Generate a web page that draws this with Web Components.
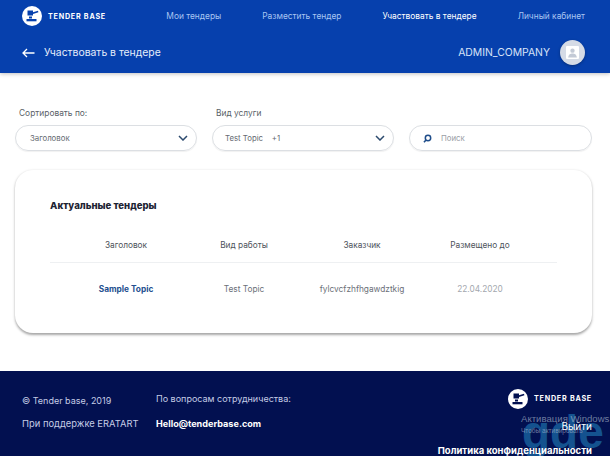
<!DOCTYPE html>
<html lang="ru">
<head>
<meta charset="utf-8">
<title>Tender Base</title>
<style>
html, body { margin: 0; padding: 0; background: #fff; }
body { font-family: Inter, "Open Sans", sans-serif; width: 610px; height: 456px; overflow: hidden; position: relative; }
</style>
</head>
<body>
<tb-header></tb-header>
<tb-filters></tb-filters>
<tb-card></tb-card>
<tb-footer></tb-footer>
<tb-watermark></tb-watermark>
<script>
class TbLogo extends HTMLElement {
	constructor() {
		super();
		this.attachShadow({ mode: 'open' });
		this.shadowRoot.innerHTML = `
			<style>
				:host { display: flex; align-items: center; gap: 6px; color: #fff; }
				svg { width: 20px; height: 20px; display: block; flex: none; }
				span { font-size: 7.2px; font-weight: 700; letter-spacing: .75px; white-space: nowrap; }
			</style>
			<svg viewBox="0 0 20 20">
				<circle cx="10" cy="10" r="10" fill="#fff"/>
				<path d="M5.500 4.500h5.500v1.800l5-1.500.4 1.500-5.400 1.600v1.600H5.500z" fill="var(--mark, #0640ad)"/>
				<path d="M7 10.500h3v2H7z" fill="var(--mark, #0640ad)"/>
				<path d="M4.500 13h10v2.300h-10z" fill="var(--mark, #0640ad)"/>
			</svg>
			<span>TENDER BASE</span>
		`;
	}
}
customElements.define('tb-logo', TbLogo);

class TbHeader extends HTMLElement {
	constructor() {
		super();
		this.attachShadow({ mode: 'open' });
		this.shadowRoot.innerHTML = `
			<style>
				:host { display: block; height: 73px; box-sizing: border-box; background: #0640ad; color: #fff; box-shadow: 0 1px 4px rgba(0,0,0,.25); position: relative; }
				.top { height: 32px; display: flex; align-items: center; padding: 0 25px 0 22px; justify-content: space-between; }
				nav { display: flex; gap: 41px; font-size: 8.4px; color: #a9c6f2; }
				nav a.on { color: #fff; }
				.sub { height: 41px; display: flex; align-items: center; padding: 0 25px 2px 22px; justify-content: space-between; }
				.title { display: flex; align-items: center; gap: 9px; font-size: 10.4px; color: #e6eefb; }
				.title svg { width: 13px; height: 10px; display: block; }
				.user { display: flex; align-items: center; gap: 10px; font-size: 10.4px; color: #d6e2f7; }
				.ava { width: 25px; height: 25px; border-radius: 50%; background: #d5dbe6; display: flex; align-items: center; justify-content: center; box-shadow: 0 1px 3px rgba(0,0,0,.3); }
				.ava svg { width: 13px; height: 13px; display: block; }
			</style>
			<div class="top">
				<tb-logo></tb-logo>
				<nav>
					<a>Мои тендеры</a>
					<a>Разместить тендер</a>
					<a class="on">Участвовать в тендере</a>
					<a>Личный кабинет</a>
				</nav>
			</div>
			<div class="sub">
				<div class="title">
					<svg viewBox="0 0 13 10"><path d="M12.500 5H1M5 1 1 5l4 4" fill="none" stroke="#fff" stroke-width="1.300"/></svg>
					<span>Участвовать в тендере</span>
				</div>
				<div class="user">
					<span>ADMIN_COMPANY</span>
					<div class="ava">
						<svg viewBox="0 0 12 12"><rect width="12" height="12" rx="1" fill="#fff"/><circle cx="6" cy="4.300" r="2" fill="#c3cad6"/><path d="M2 10.500c.5-3 2-3.600 4-3.600s3.500.6 4 3.600z" fill="#c3cad6"/></svg>
					</div>
				</div>
			</div>
		`;
	}
}
customElements.define('tb-header', TbHeader);

class TbSelect extends HTMLElement {
	constructor() {
		super();
		this.attachShadow({ mode: 'open' });
		this.shadowRoot.innerHTML = `
			<style>
				:host { display: block; width: 182px; }
				label { display: block; font-size: 8.4px; color: #5a5f68; margin: 0 0 6px 4px; height: 11px; line-height: 11px; }
				.box { height: 26px; box-sizing: border-box; border: 1px solid #dcdfe3; border-radius: 13px; display: flex; align-items: center; justify-content: space-between; padding: 0 8px 0 var(--pad, 14px); font-size: 7.8px; color: #666b72; box-shadow: 0 1px 1px rgba(0,0,0,.06); }
				svg { width: 10px; height: 6px; display: block; }
			</style>
			<label></label>
			<div class="box">
				<div><slot></slot></div>
				<svg viewBox="0 0 10 6"><path d="M1 1l4 4 4-4" fill="none" stroke="#2c4a6e" stroke-width="1.500"/></svg>
			</div>
		`;
		this.shadowRoot.querySelector('label').textContent = this.getAttribute('label');
	}
}
customElements.define('tb-select', TbSelect);

class TbSearch extends HTMLElement {
	constructor() {
		super();
		this.attachShadow({ mode: 'open' });
		this.shadowRoot.innerHTML = `
			<style>
				:host { display: flex; width: 183px; height: 26px; box-sizing: border-box; border: 1px solid #dcdfe3; border-radius: 13px; align-items: center; gap: 9px; padding-left: 13px; font-size: 7.8px; color: #9a9ea5; box-shadow: 0 1px 1px rgba(0,0,0,.06); }
				svg { width: 9px; height: 9px; display: block; }
			</style>
			<svg viewBox="0 0 9 9"><circle cx="5" cy="4" r="2.700" fill="none" stroke="#1f4d8a" stroke-width="1.500"/><path d="M3 6 1 8.300" stroke="#1f4d8a" stroke-width="1.600"/></svg>
			<span>Поиск</span>
		`;
	}
}
customElements.define('tb-search', TbSearch);

class TbFilters extends HTMLElement {
	constructor() {
		super();
		this.attachShadow({ mode: 'open' });
		this.shadowRoot.innerHTML = `
			<style>
				:host { display: flex; align-items: flex-end; gap: 15px; padding: 34px 18px 0 15px; height: 44px; }
			</style>
			<tb-select label="Сортировать по:" style="--pad:14px">Заголовок</tb-select>
			<tb-select label="Вид услуги" style="--pad:12px"><span>Test Topic &nbsp;&nbsp; +1</span></tb-select>
			<tb-search></tb-search>
		`;
	}
}
customElements.define('tb-filters', TbFilters);

class TbCard extends HTMLElement {
	constructor() {
		super();
		this.attachShadow({ mode: 'open' });
		this.shadowRoot.innerHTML = `
			<style>
				:host { display: block; box-sizing: border-box; width: 577px; height: 163px; margin: 19px 0 0 15px; padding: 30px 35px 0; border-radius: 18px; background: #fff; box-shadow: 0 1.5px 2.5px rgba(0,0,0,.35); }
				h2 { margin: 0; font-size: 9.6px; line-height: 12px; font-weight: 800; color: #1d2433; }
				.head, .row { display: grid; grid-template-columns: repeat(4, 118px); padding-left: 17px; text-align: center; }
				.head { margin-top: 27px; height: 24px; box-sizing: border-box; font-size: 8.3px; line-height: 12px; color: #4e535b; border-bottom: 1px solid #eef0f2; }
				.row { margin-top: 20px; font-size: 8.3px; line-height: 12px; color: #6b7078; }
				.row b { color: #24508f; font-weight: 700; }
				.row .date { color: #a4a8ae; }
			</style>
			<h2>Актуальные тендеры</h2>
			<div class="head"><span>Заголовок</span><span>Вид работы</span><span>Заказчик</span><span>Размещено до</span></div>
			<div class="row"><b>Sample Topic</b><span>Test Topic</span><span>fylcvcfzhfhgawdztkig</span><span class="date">22.04.2020</span></div>
		`;
	}
}
customElements.define('tb-card', TbCard);

class TbFooter extends HTMLElement {
	constructor() {
		super();
		this.attachShadow({ mode: 'open' });
		this.shadowRoot.innerHTML = `
			<style>
				:host { display: grid; grid-template-columns: 134px 1fr 170px; position: absolute; left: 0; right: 0; top: 371px; height: 85px; box-sizing: border-box; padding: 18px 18px 0 22px; background: #021050; color: #c5cde6; font-size: 9px; line-height: 12px; }
				.c1 { display: flex; flex-direction: column; gap: 11px; padding-top: 6px; }
				.c1 .sup { font-size: 9.4px; }
				.c2 { display: flex; flex-direction: column; gap: 13px; padding-top: 4px; }
				.c2 b { color: #fff; font-weight: 700; font-size: 9.1px; }
				.c3 { display: flex; flex-direction: column; align-items: flex-end; color: #fff; --mark: #021050; position: relative; z-index: 2; }
				.c3 a { margin-top: 11px; font-size: 10px; }
				.c3 b { margin-top: 13px; font-size: 9.5px; font-weight: 700; white-space: nowrap; }
			</style>
			<div class="c1"><span>© Tender base, 2019</span><span class="sup">При поддержке ERATART</span></div>
			<div class="c2"><span>По вопросам сотрудничества:</span><b>Hello@tenderbase.com</b></div>
			<div class="c3"><tb-logo></tb-logo><a>Выйти</a><b>Политика конфиденциальности</b></div>
		`;
	}
}
customElements.define('tb-footer', TbFooter);

class TbWatermark extends HTMLElement {
	constructor() {
		super();
		this.attachShadow({ mode: 'open' });
		this.shadowRoot.innerHTML = `
			<style>
				:host { position: absolute; left: 0; top: 0; width: 610px; height: 456px; overflow: hidden; pointer-events: none; z-index: 1; }
				.gde { position: absolute; left: 522px; top: 409px; font: 700 46px/47px "Liberation Sans", sans-serif; color: #14528f; }
				.win { position: absolute; left: 521px; top: 413px; font: 400 9.6px/11px "Liberation Sans", sans-serif; color: rgba(170,185,205,.65); white-space: nowrap; }
				.win small { font-size: 6.5px; }
			</style>
			<div class="gde">gde</div>
			<div class="win">Активация Windows<br><small>Чтобы активировать</small></div>
		`;
	}
}
customElements.define('tb-watermark', TbWatermark);
</script>
</body>
</html>
